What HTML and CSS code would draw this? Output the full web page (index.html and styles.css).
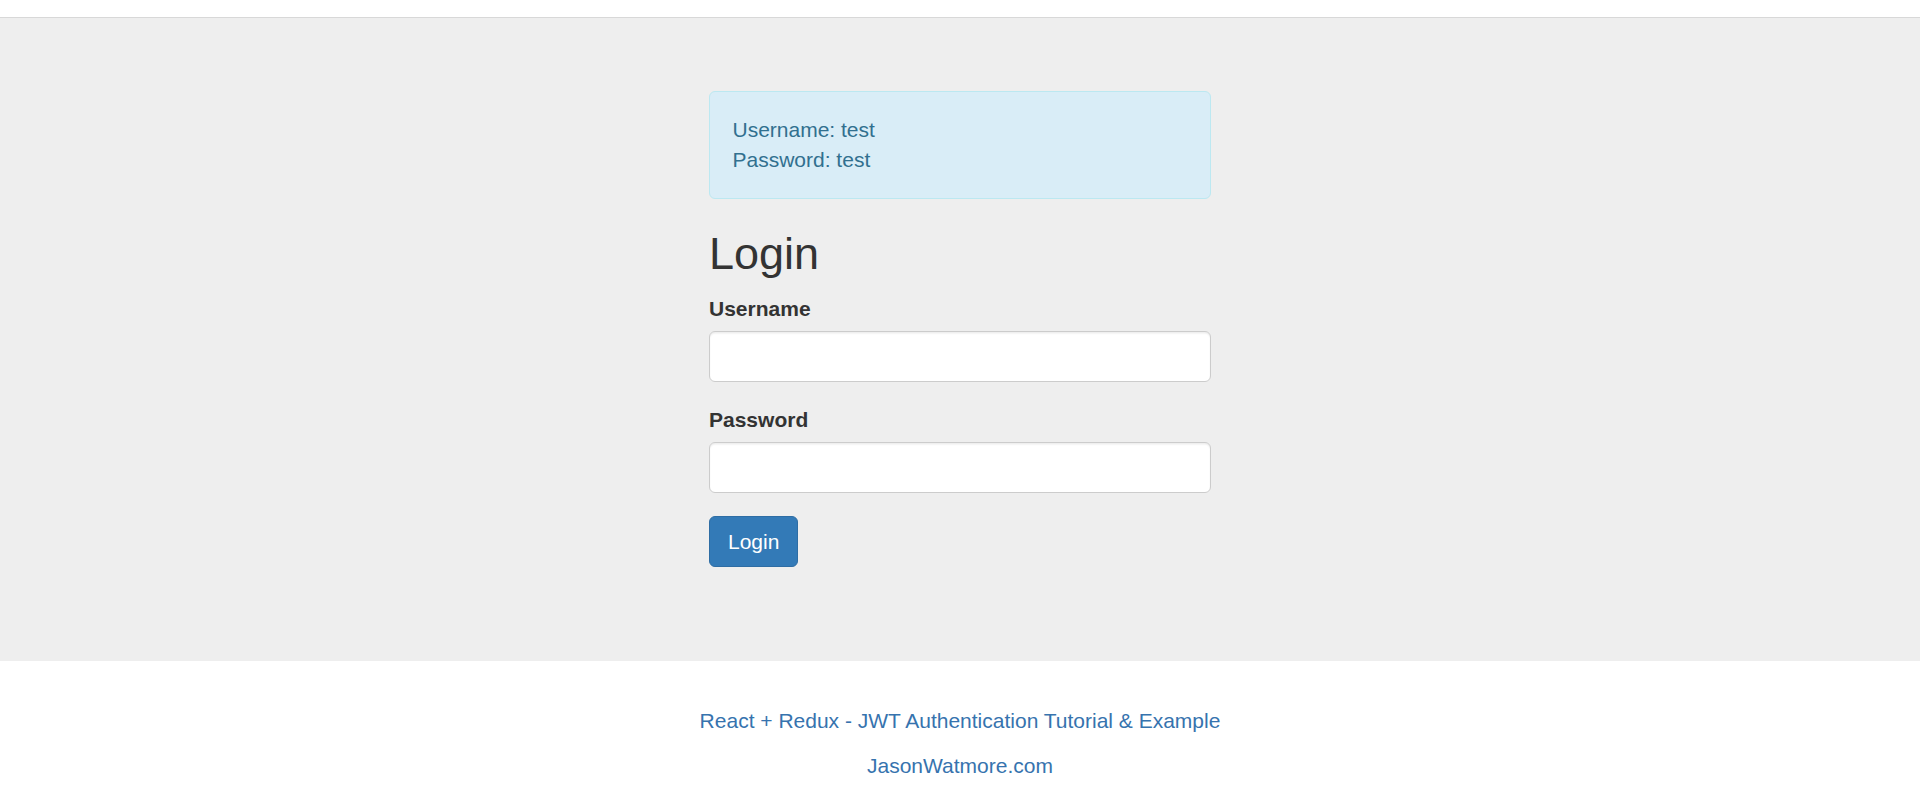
FILE: index.html
```html
<!DOCTYPE html>
<html lang="en">
<head>
<meta charset="utf-8">
<title>React + Redux - JWT Authentication Tutorial &amp; Example</title>
<link rel="stylesheet" href="styles.css">
</head>
<body>
<div class="topbar"></div>
<main class="jumbotron">
  <div class="container">
    <div class="alert">
      Username: test<br>
      Password: test
    </div>
    <h2 class="title">Login</h2>
    <form class="form" onsubmit="return false;">
      <div class="form-group">
        <label class="label" for="username">Username</label>
        <input class="input" id="username" type="text" name="username">
      </div>
      <div class="form-group">
        <label class="label" for="password">Password</label>
        <input class="input" id="password" type="password" name="password">
      </div>
      <div class="form-group">
        <button class="btn" type="submit">Login</button>
      </div>
    </form>
  </div>
</main>
<footer class="credits">
  <p class="credit-line"><a class="credit-link" href="#">React + Redux - JWT Authentication Tutorial &amp; Example</a></p>
  <p class="credit-line"><a class="credit-link" href="#">JasonWatmore.com</a></p>
</footer>
</body>
</html>
```
FILE: styles.css
```css
* {
  box-sizing: border-box;
}

html, body {
  margin: 0;
  padding: 0;
  background: #fff;
}

body {
  font-family: "Liberation Sans", Arial, Helvetica, sans-serif;
  font-size: 21px;
  line-height: 30px;
  color: #333;
}

.topbar {
  height: 17px;
  background: #fff;
}

.jumbotron {
  background: #eee;
  border-top: 1px solid #d8d8d8;
  padding: 73px 0 72px;
}

.container {
  width: 502px;
  margin: 0 auto;
}

.alert {
  background: #d9edf7;
  border: 1px solid #bce8f1;
  color: #31708f;
  border-radius: 6px;
  padding: 23px 22.5px;
  margin-bottom: 30px;
}

.title {
  font-size: 45px;
  line-height: 49.5px;
  font-weight: 500;
  margin: 30px 0 15px;
  color: #333;
}

.form {
  margin: 0;
}

.form-group {
  margin-bottom: 22.5px;
}

.label {
  display: inline-block;
  font-weight: bold;
  margin-bottom: 7.5px;
}

.input {
  display: block;
  width: 100%;
  height: 51px;
  padding: 9px 18px;
  font-family: inherit;
  font-size: 21px;
  line-height: 30px;
  color: #555;
  background: #fff;
  border: 1px solid #ccc;
  border-radius: 6px;
  box-shadow: inset 0 1.5px 1.5px rgba(0, 0, 0, 0.075);
  outline: none;
}

.btn {
  display: inline-block;
  padding: 9px 18px;
  font-family: inherit;
  font-size: 21px;
  line-height: 31px;
  color: #fff;
  background: #337ab7;
  border: 1px solid #2e6da4;
  border-radius: 6px;
  cursor: pointer;
}

.credits {
  padding-top: 45px;
  text-align: center;
}

.credit-line {
  margin: 0 0 15px;
}

.credit-link {
  color: #3673ae;
  text-decoration: none;
}
```
